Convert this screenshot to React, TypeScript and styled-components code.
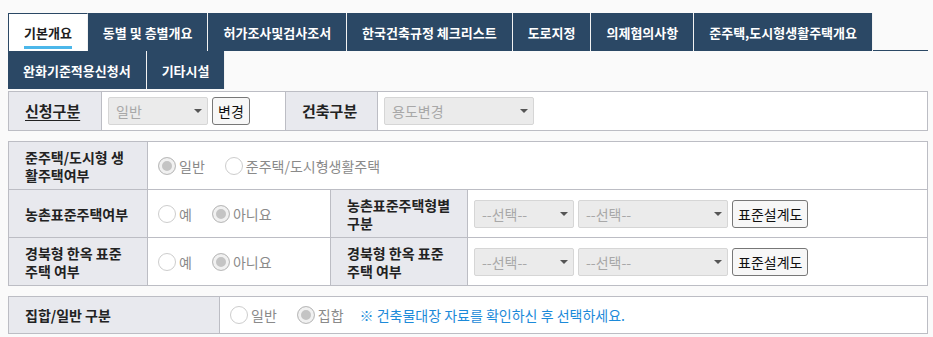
import styled, { createGlobalStyle } from "styled-components";

const GlobalStyle = createGlobalStyle`
  body {
    margin: 0;
    background: #fafafa;
    font-family: "Noto Sans CJK KR", "Noto Sans", sans-serif;
    color: #222;
  }
`;

const Page = styled.div`
  padding: 13px 5px 4px 8px;
`;

const TabBar = styled.ul`
  list-style: none;
  margin: 0 0 2px;
  padding: 0;
  display: flex;
  flex-wrap: wrap;
  background: linear-gradient(#2b4865, #2b4865) no-repeat 0 37px / 100% 1px;
`;

const Tab = styled.li<{ $active?: boolean }>`
  position: relative;
  box-sizing: border-box;
  height: 38px;
  display: flex;
  align-items: center;
  padding: 0 15px;
  border-right: 1px solid #f2f2f2;
  background: ${(p) => (p.$active ? "#fff" : "#2b4865")};
  color: ${(p) => (p.$active ? "#1d1d1d" : "#fff")};
  font-size: 13px;
  font-weight: 700;
  white-space: nowrap;
  ${(p) =>
    p.$active &&
    `
    border-left: 1px solid #2b4865;
    border-top: 1px solid #2b4865;
    &::after {
      content: "";
      position: absolute;
      left: 15px;
      right: 15px;
      bottom: 2px;
      height: 3px;
      background: #4cb7ea;
    }
  `}
`;

const FormTable = styled.table`
  width: 100%;
  border-collapse: collapse;
  table-layout: fixed;
  margin-bottom: 10px;
  font-size: 14px;
  line-height: 18px;
`;

const Label = styled.th<{ $py?: number; $big?: boolean; $underline?: boolean }>`
  background: #e8e9ee;
  border: 1px solid #bcbdc4;
  text-align: left;
  vertical-align: middle;
  padding: ${(p) => p.$py ?? 6}px 14px ${(p) => p.$py ?? 5}px 16px;
  font-size: ${(p) => (p.$big ? 15 : 14)}px;
  font-weight: 700;
  color: #222;
  text-decoration: ${(p) => (p.$underline ? "underline" : "none")};
  text-underline-offset: 3px;
`;

const Cell = styled.td`
  background: #fff;
  border: 1px solid #bcbdc4;
  padding: 5px 6px;
  vertical-align: middle;
`;

const Controls = styled.div`
  display: flex;
  align-items: center;
  gap: 4px;
`;

const Select = styled.div<{ $w: number }>`
  box-sizing: border-box;
  width: ${(p) => p.$w}px;
  height: 28px;
  display: flex;
  align-items: center;
  justify-content: space-between;
  padding: 0 5px 0 7px;
  background: #ebebeb;
  border: 1px solid #d6d6d6;
  border-radius: 2px;
  color: #a8a8a8;
  font-size: 14px;
  &::after {
    content: "";
    border-left: 4px solid transparent;
    border-right: 4px solid transparent;
    border-top: 4px solid #555;
  }
`;

const Button = styled.button`
  box-sizing: border-box;
  height: 28px;
  padding: 0 5px;
  border: 1px solid #777;
  border-radius: 3px;
  background: #f7f7f7;
  font-family: inherit;
  font-size: 14px;
  color: #111;
`;

const RadioRow = styled.div`
  display: flex;
  align-items: center;
`;

const RadioLabel = styled.label`
  display: inline-flex;
  align-items: center;
  gap: 3px;
  margin-right: 16px;
  color: #8a8a8a;
  font-size: 14px;
`;

const Radio = styled.input.attrs({ type: "radio", disabled: true })`
  appearance: none;
  box-sizing: border-box;
  margin: 0 0 0 4px;
  width: 18px;
  height: 18px;
  border-radius: 50%;
  border: 1px solid #cdcdcd;
  background: #fff;
  &:checked {
    border-color: #bdbdbd;
    background: #c4c4c4;
    box-shadow: inset 0 0 0 3px #f1f1f1;
  }
`;

const Note = styled.span`
  color: #1c8ad9;
  font-size: 14px;
`;

function RadioOption({ name, label, checked }: { name: string; label: string; checked?: boolean }) {
  return (
    <RadioLabel>
      <Radio name={name} defaultChecked={checked} />
      {label}
    </RadioLabel>
  );
}

const tabs = [
  "기본개요",
  "동별 및 층별개요",
  "허가조사및검사조서",
  "한국건축규정 체크리스트",
  "도로지정",
  "의제협의사항",
  "준주택,도시형생활주택개요",
  "완화기준적용신청서",
  "기타시설",
];

export default function App() {
  return (
    <Page>
      <GlobalStyle />
      <TabBar>
        {tabs.map((t, i) => (
          <Tab key={t} $active={i === 0}>
            {t}
          </Tab>
        ))}
      </TabBar>

      <FormTable>
        <colgroup>
          <col style={{ width: 93 }} />
          <col style={{ width: 184 }} />
          <col style={{ width: 92 }} />
          <col />
        </colgroup>
        <tbody>
          <tr>
            <Label $py={0} $big $underline>신청구분</Label>
            <Cell>
              <Controls>
                <Select $w={100}>일반</Select>
                <Button>변경</Button>
              </Controls>
            </Cell>
            <Label $py={0} $big>건축구분</Label>
            <Cell>
              <Select $w={150}>용도변경</Select>
            </Cell>
          </tr>
        </tbody>
      </FormTable>

      <FormTable>
        <colgroup>
          <col style={{ width: 139 }} />
          <col style={{ width: 183 }} />
          <col style={{ width: 137 }} />
          <col />
        </colgroup>
        <tbody>
          <tr>
            <Label>준주택/도시형 생활주택여부</Label>
            <Cell colSpan={3}>
              <RadioRow>
                <RadioOption name="house" label="일반" checked />
                <RadioOption name="house" label="준주택/도시형생활주택" />
              </RadioRow>
            </Cell>
          </tr>
          <tr>
            <Label>농촌표준주택여부</Label>
            <Cell>
              <RadioRow>
                <RadioOption name="farm" label="예" />
                <RadioOption name="farm" label="아니요" checked />
              </RadioRow>
            </Cell>
            <Label>농촌표준주택형별 구분</Label>
            <Cell>
              <Controls>
                <Select $w={100}>--선택--</Select>
                <Select $w={150}>--선택--</Select>
                <Button>표준설계도</Button>
              </Controls>
            </Cell>
          </tr>
          <tr>
            <Label>경북형 한옥 표준 주택 여부</Label>
            <Cell>
              <RadioRow>
                <RadioOption name="hanok" label="예" />
                <RadioOption name="hanok" label="아니요" checked />
              </RadioRow>
            </Cell>
            <Label>경북형 한옥 표준 주택 여부</Label>
            <Cell>
              <Controls>
                <Select $w={100}>--선택--</Select>
                <Select $w={150}>--선택--</Select>
                <Button>표준설계도</Button>
              </Controls>
            </Cell>
          </tr>
        </tbody>
      </FormTable>

      <FormTable>
        <colgroup>
          <col style={{ width: 211 }} />
          <col />
        </colgroup>
        <tbody>
          <tr>
            <Label $py={9}>집합/일반 구분</Label>
            <Cell>
              <RadioRow>
                <RadioOption name="group" label="일반" />
                <RadioOption name="group" label="집합" checked />
                <Note>※ 건축물대장 자료를 확인하신 후 선택하세요.</Note>
              </RadioRow>
            </Cell>
          </tr>
        </tbody>
      </FormTable>
    </Page>
  );
}
